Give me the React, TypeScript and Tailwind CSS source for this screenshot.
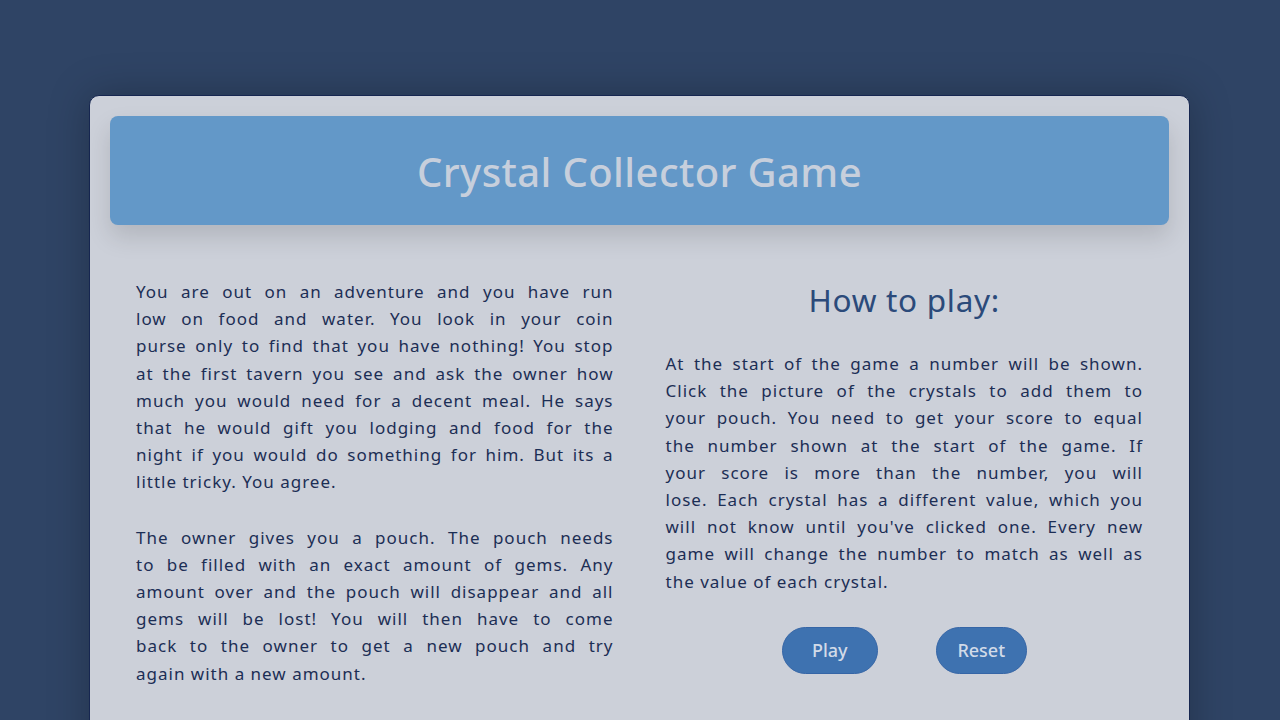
import React from "react";

const left1 = [
  "You are out on an adventure and you have run",
  "low on food and water. You look in your coin",
  "purse only to find that you have nothing! You stop",
  "at the first tavern you see and ask the owner how",
  "much you would need for a decent meal. He says",
  "that he would gift you lodging and food for the",
  "night if you would do something for him. But its a",
  "little tricky. You agree.",
];
const left2 = [
  "The owner gives you a pouch. The pouch needs",
  "to be filled with an exact amount of gems. Any",
  "amount over and the pouch will disappear and all",
  "gems will be lost! You will then have to come",
  "back to the owner to get a new pouch and try",
  "again with a new amount.",
];
const right1 = [
  "At the start of the game a number will be shown.",
  "Click the picture of the crystals to add them to",
  "your pouch. You need to get your score to equal",
  "the number shown at the start of the game. If",
  "your score is more than the number, you will",
  "lose. Each crystal has a different value, which you",
  "will not know until you've clicked one. Every new",
  "game will change the number to match as well as",
  "the value of each crystal.",
];

function Para({ lines, className = "" }: { lines: string[]; className?: string }) {
  return (
    <p className={"text-[17px] leading-[27.2px] tracking-[1px] text-[#1c2e55] " + className}>
      {lines.map((l, i) => (
        <span
          key={i}
          className={
            "block whitespace-nowrap " +
            (i < lines.length - 1 ? "text-justify [text-align-last:justify]" : "text-left")
          }
        >
          {l}
        </span>
      ))}
    </p>
  );
}

export default function App() {
  return (
    <div
      className="min-h-screen bg-[#2f4465] pt-[95px] overflow-hidden"
      style={{ fontFamily: '"Noto Sans", "DejaVu Sans", sans-serif' }}
    >
      <div className="ml-[89px] w-[1101px] rounded-t-[10px] border border-[#162650] bg-[#ccd0d9] p-5 pb-10 min-h-[700px] shadow-[0_0_40px_rgba(0,0,0,0.25)]">
        <div className="flex h-[109px] items-center justify-center rounded-[8px] bg-[#6398c8] shadow-[0_12px_24px_rgba(0,0,0,0.13)]">
          <h1 className="pt-[3px] text-[40px] font-medium tracking-[0.4px] text-[#c7cfdc]">
            Crystal Collector Game
          </h1>
        </div>
        <div className="grid grid-cols-2">
          <div className="px-[26px] pt-[53px]">
            <Para lines={left1} />
            <Para lines={left2} className="mt-[28px]" />
          </div>
          <div className="px-[26px] pt-[55px]">
            <h2 className="text-center text-[31.5px] leading-[40px] tracking-[0.7px] text-[#2b4a7a]">
              How to play:
            </h2>
            <Para lines={right1} className="mt-[30px]" />
            <div className="mt-[32px] flex justify-center gap-[58px]">
              <button className="h-[47px] w-[96px] rounded-full border border-[#3565a6] bg-[#3e72b0] text-[18px] font-medium text-[#d2dbe8]">
                Play
              </button>
              <button className="h-[47px] w-[91px] rounded-full border border-[#3565a6] bg-[#3e72b0] text-[18px] font-medium text-[#d2dbe8]">
                Reset
              </button>
            </div>
          </div>
        </div>
      </div>
    </div>
  );
}
